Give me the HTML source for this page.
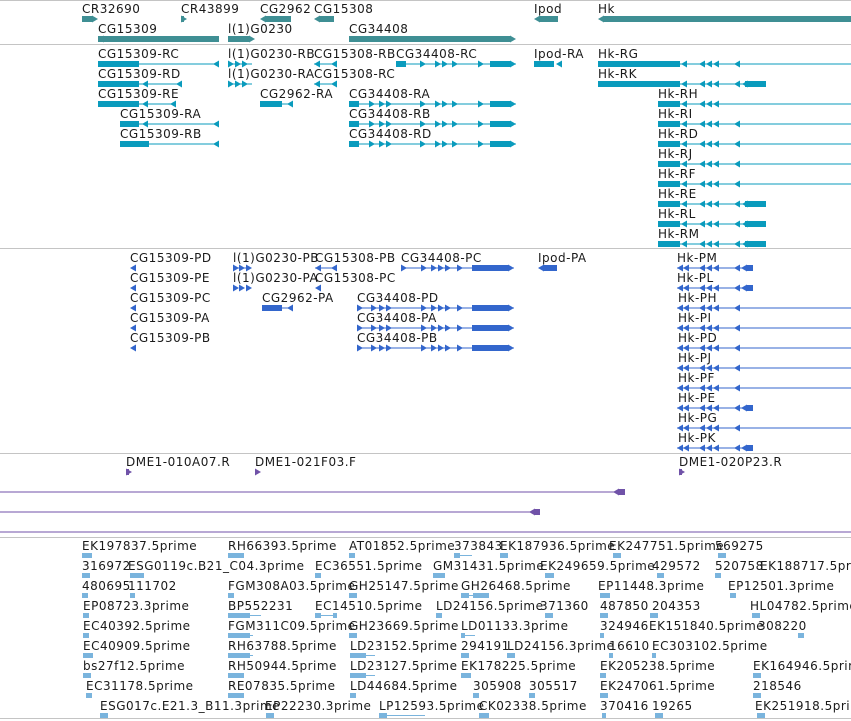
<!DOCTYPE html>
<html><head><meta charset="utf-8"><style>
html,body{margin:0;padding:0;background:#fff;width:851px;height:721px;overflow:hidden}
svg{display:block}
text{font-family:"DejaVu Sans","Liberation Sans",sans-serif;font-size:12px;fill:#1a1a1a;letter-spacing:0.5px}
</style></head><body>
<svg width="851" height="721" viewBox="0 0 851 721" xmlns="http://www.w3.org/2000/svg">
<defs>
<polygon id="la" points="0,0 6,-3.5 6,3.5"/>
<polygon id="ra" points="6,0 0,-3.5 0,3.5"/>
</defs>
<g fill="#c4c4c4">
<rect x="0" y="0" width="851" height="1"/>
<rect x="0" y="44" width="851" height="1"/>
<rect x="0" y="248" width="851" height="1"/>
<rect x="0" y="453" width="851" height="1"/>
<rect x="0" y="537" width="851" height="1"/>
<rect x="0" y="718" width="851" height="1"/>
</g>
<g fill="#3f8f94">
<rect x="82" y="16" width="11" height="6"/><use href="#ra" x="92" y="19"/>
<use href="#ra" x="181" y="19"/><rect x="181" y="16" width="3" height="6"/>
<rect x="266" y="16" width="25" height="6"/><use href="#la" x="260" y="19"/>
<rect x="320" y="16" width="14" height="6"/><use href="#la" x="314" y="19"/>
<rect x="540" y="16" width="18" height="6"/><use href="#la" x="534" y="19"/>
<rect x="604" y="16" width="247" height="6"/><use href="#la" x="598" y="19"/>
<rect x="98" y="36" width="121" height="6"/><use href="#la" x="98" y="39"/>
<rect x="228" y="36" width="22" height="6"/><use href="#ra" x="249" y="39"/>
<rect x="349" y="36" width="161" height="6"/><use href="#ra" x="510" y="39"/>
</g>
<g>
<text x="82" y="13">CR32690</text><text x="181" y="13">CR43899</text><text x="260" y="13">CG2962</text><text x="314" y="13">CG15308</text><text x="534" y="13">Ipod</text><text x="598" y="13">Hk</text>
<text x="98" y="33">CG15309</text><text x="228" y="33">l(1)G0230</text><text x="349" y="33">CG34408</text>
</g>
<g fill="#0a9bbd">
<rect x="98" y="61" width="41" height="6"/><rect x="98" y="63.5" width="121" height="1"/><use href="#la" x="213" y="64"/>
<use href="#ra" x="228" y="64"/><use href="#ra" x="235" y="64"/><use href="#ra" x="242" y="64"/><rect x="228" y="63.5" width="24" height="1"/>
<use href="#la" x="314" y="64"/><rect x="314" y="63.5" width="23" height="1"/><use href="#la" x="331" y="64"/>
<rect x="396" y="61" width="10" height="6"/><rect x="396" y="63.5" width="120" height="1"/><use href="#ra" x="420" y="64"/><use href="#ra" x="435" y="64"/><use href="#ra" x="442" y="64"/><use href="#ra" x="452" y="64"/><use href="#ra" x="478" y="64"/><rect x="490" y="61" width="20" height="6"/><use href="#ra" x="510" y="64"/>
<rect x="534" y="61" width="20" height="6"/><use href="#la" x="556" y="64"/>
<rect x="598" y="61" width="82" height="6"/><rect x="598" y="63.5" width="253" height="1"/><use href="#la" x="681" y="64"/><use href="#la" x="699" y="64"/><use href="#la" x="706" y="64"/><use href="#la" x="713" y="64"/><use href="#la" x="734" y="64"/>
<rect x="98" y="81" width="41" height="6"/><rect x="98" y="83.5" width="84" height="1"/><use href="#la" x="142" y="84"/><use href="#la" x="176" y="84"/>
<use href="#ra" x="228" y="84"/><use href="#ra" x="235" y="84"/><use href="#ra" x="242" y="84"/><rect x="228" y="83.5" width="24" height="1"/>
<use href="#la" x="314" y="84"/><rect x="314" y="83.5" width="23" height="1"/><use href="#la" x="331" y="84"/>
<rect x="598" y="81" width="82" height="6"/><rect x="598" y="83.5" width="168" height="1"/><use href="#la" x="681" y="84"/><use href="#la" x="699" y="84"/><use href="#la" x="706" y="84"/><use href="#la" x="713" y="84"/><use href="#la" x="734" y="84"/><rect x="745" y="81" width="21" height="6"/><use href="#la" x="742" y="84"/>
<rect x="98" y="101" width="41" height="6"/><rect x="98" y="103.5" width="78" height="1"/><use href="#la" x="142" y="104"/><use href="#la" x="170" y="104"/>
<rect x="260" y="101" width="22" height="6"/><rect x="260" y="103.5" width="33" height="1"/><use href="#la" x="287" y="104"/>
<rect x="658" y="101" width="22" height="6"/><rect x="658" y="103.5" width="193" height="1"/><use href="#la" x="681" y="104"/><use href="#la" x="699" y="104"/><use href="#la" x="706" y="104"/><use href="#la" x="713" y="104"/>
<rect x="120" y="121" width="19" height="6"/><rect x="120" y="123.5" width="99" height="1"/><use href="#la" x="142" y="124"/><use href="#la" x="213" y="124"/>
<rect x="658" y="121" width="22" height="6"/><rect x="658" y="123.5" width="193" height="1"/><use href="#la" x="681" y="124"/><use href="#la" x="699" y="124"/><use href="#la" x="706" y="124"/><use href="#la" x="713" y="124"/><use href="#la" x="734" y="124"/>
<rect x="120" y="141" width="29" height="6"/><rect x="120" y="143.5" width="99" height="1"/><use href="#la" x="213" y="144"/>
<rect x="658" y="141" width="22" height="6"/><rect x="658" y="143.5" width="193" height="1"/><use href="#la" x="681" y="144"/><use href="#la" x="699" y="144"/><use href="#la" x="706" y="144"/><use href="#la" x="713" y="144"/><use href="#la" x="734" y="144"/>
<g id="cgt"><rect x="349" y="101" width="10" height="6"/><rect x="349" y="103.5" width="167" height="1"/><use href="#ra" x="369" y="104"/><use href="#ra" x="379" y="104"/><use href="#ra" x="386" y="104"/><use href="#ra" x="420" y="104"/><use href="#ra" x="435" y="104"/><use href="#ra" x="442" y="104"/><use href="#ra" x="452" y="104"/><use href="#ra" x="478" y="104"/><rect x="490" y="101" width="20" height="6"/><use href="#ra" x="510" y="104"/></g>
<use href="#cgt" y="20"/><use href="#cgt" y="40"/>
<g id="hkl"><rect x="658" y="161" width="22" height="6"/><rect x="658" y="163.5" width="193" height="1"/><use href="#la" x="681" y="164"/><use href="#la" x="699" y="164"/><use href="#la" x="706" y="164"/><use href="#la" x="713" y="164"/><use href="#la" x="734" y="164"/></g>
<use href="#hkl" y="20"/>
<g id="hks"><rect x="658" y="201" width="22" height="6"/><rect x="658" y="203.5" width="108" height="1"/><use href="#la" x="681" y="204"/><use href="#la" x="699" y="204"/><use href="#la" x="706" y="204"/><use href="#la" x="713" y="204"/><use href="#la" x="734" y="204"/><rect x="745" y="201" width="21" height="6"/><use href="#la" x="742" y="204"/></g>
<use href="#hks" y="20"/><use href="#hks" y="40"/>
</g>
<g>
<text x="98" y="58">CG15309-RC</text><text x="228" y="58">l(1)G0230-RB</text><text x="314" y="58">CG15308-RB</text><text x="396" y="58">CG34408-RC</text><text x="534" y="58">Ipod-RA</text><text x="598" y="58">Hk-RG</text>
<text x="98" y="78">CG15309-RD</text><text x="228" y="78">l(1)G0230-RA</text><text x="314" y="78">CG15308-RC</text><text x="598" y="78">Hk-RK</text>
<text x="98" y="98">CG15309-RE</text><text x="260" y="98">CG2962-RA</text><text x="349" y="98">CG34408-RA</text><text x="658" y="98">Hk-RH</text>
<text x="120" y="118">CG15309-RA</text><text x="349" y="118">CG34408-RB</text><text x="658" y="118">Hk-RI</text>
<text x="120" y="138">CG15309-RB</text><text x="349" y="138">CG34408-RD</text><text x="658" y="138">Hk-RD</text>
<text x="658" y="158">Hk-RJ</text><text x="658" y="178">Hk-RF</text><text x="658" y="198">Hk-RE</text><text x="658" y="218">Hk-RL</text><text x="658" y="238">Hk-RM</text>
</g>
<g fill="#3366cc">
<use href="#la" x="130" y="268"/><use href="#la" x="130" y="288"/><use href="#la" x="130" y="308"/><use href="#la" x="130" y="328"/><use href="#la" x="130" y="348"/>
<use href="#ra" x="233" y="268"/><use href="#ra" x="239" y="268"/><use href="#ra" x="246" y="268"/><rect x="233" y="267.5" width="18" height="1"/>
<use href="#ra" x="233" y="288"/><use href="#ra" x="239" y="288"/><use href="#ra" x="246" y="288"/>
<use href="#la" x="315" y="268"/><rect x="315" y="267.5" width="22" height="1"/><use href="#la" x="331" y="268"/>
<use href="#la" x="315" y="288"/>
<rect x="262" y="305" width="20" height="6"/><rect x="262" y="307.5" width="31" height="1"/><use href="#la" x="287" y="308"/>
<rect x="401" y="267.5" width="113" height="1"/><use href="#ra" x="401" y="268"/><use href="#ra" x="421" y="268"/><use href="#ra" x="431" y="268"/><use href="#ra" x="438" y="268"/><use href="#ra" x="445" y="268"/><use href="#ra" x="457" y="268"/><rect x="472" y="265" width="36" height="6"/><use href="#ra" x="508" y="268"/>
<rect x="544" y="265" width="13" height="6"/><use href="#la" x="538" y="268"/>
<g id="cgp"><rect x="357" y="307.5" width="157" height="1"/><use href="#ra" x="357" y="308"/><use href="#ra" x="371" y="308"/><use href="#ra" x="379" y="308"/><use href="#ra" x="386" y="308"/><use href="#ra" x="421" y="308"/><use href="#ra" x="431" y="308"/><use href="#ra" x="438" y="308"/><use href="#ra" x="445" y="308"/><use href="#ra" x="457" y="308"/><rect x="472" y="305" width="36" height="6"/><use href="#ra" x="508" y="308"/></g>
<use href="#cgp" y="20"/><use href="#cgp" y="40"/>
<g id="hps"><rect x="677" y="267.5" width="76" height="1"/><use href="#la" x="677" y="268"/><use href="#la" x="683" y="268"/><use href="#la" x="699" y="268"/><use href="#la" x="706" y="268"/><use href="#la" x="713" y="268"/><use href="#la" x="734" y="268"/><use href="#la" x="741" y="268"/><rect x="747" y="265" width="6" height="6"/></g>
<use href="#hps" y="20"/><use href="#hps" y="140"/><use href="#hps" y="180"/>
<g id="hpl"><rect x="677" y="307.5" width="174" height="1"/><use href="#la" x="677" y="308"/><use href="#la" x="683" y="308"/><use href="#la" x="699" y="308"/><use href="#la" x="706" y="308"/><use href="#la" x="713" y="308"/><use href="#la" x="734" y="308"/></g>
<use href="#hpl" y="20"/><use href="#hpl" y="40"/><use href="#hpl" y="60"/><use href="#hpl" y="80"/><use href="#hpl" y="120"/>
</g>
<g>
<text x="130" y="262">CG15309-PD</text><text x="233" y="262">l(1)G0230-PB</text><text x="315" y="262">CG15308-PB</text><text x="401" y="262">CG34408-PC</text><text x="538" y="262">Ipod-PA</text><text x="677" y="262">Hk-PM</text>
<text x="130" y="282">CG15309-PE</text><text x="233" y="282">l(1)G0230-PA</text><text x="315" y="282">CG15308-PC</text><text x="677" y="282">Hk-PL</text>
<text x="130" y="302">CG15309-PC</text><text x="262" y="302">CG2962-PA</text><text x="357" y="302">CG34408-PD</text><text x="678" y="302">Hk-PH</text>
<text x="130" y="322">CG15309-PA</text><text x="357" y="322">CG34408-PA</text><text x="678" y="322">Hk-PI</text>
<text x="130" y="342">CG15309-PB</text><text x="357" y="342">CG34408-PB</text><text x="678" y="342">Hk-PD</text>
<text x="678" y="362">Hk-PJ</text><text x="678" y="382">Hk-PF</text><text x="678" y="402">Hk-PE</text><text x="678" y="422">Hk-PG</text><text x="678" y="442">Hk-PK</text>
</g>
<g fill="#7052a8">
<use href="#ra" x="126" y="472"/><rect x="126" y="469" width="3" height="6"/>
<use href="#ra" x="255" y="472"/>
<use href="#ra" x="679" y="472"/><rect x="679" y="469" width="3" height="6"/>
<rect x="0" y="491.5" width="618" height="1"/><use href="#la" x="613" y="492"/><rect x="618" y="489" width="7" height="6"/>
<rect x="0" y="511.5" width="532" height="1"/><use href="#la" x="529" y="512"/><rect x="534" y="509" width="6" height="6"/>
<rect x="0" y="531.5" width="851" height="1"/>
</g>
<g>
<text x="126" y="466">DME1-010A07.R</text><text x="255" y="466">DME1-021F03.F</text><text x="679" y="466">DME1-020P23.R</text>
</g>
<g fill="#7ab4dd">
<rect x="82" y="553" width="10" height="5"/><rect x="228" y="553" width="16" height="5"/><rect x="349" y="553" width="6" height="5"/><rect x="454" y="555" width="18" height="1"/><rect x="454" y="553" width="6" height="5"/><rect x="500" y="553" width="8" height="5"/><rect x="613" y="553" width="8" height="5"/><rect x="718" y="553" width="8" height="5"/>
<rect x="82" y="573" width="8" height="5"/><rect x="130" y="573" width="14" height="5"/><rect x="315" y="573" width="6" height="5"/><rect x="433" y="573" width="12" height="5"/><rect x="545" y="573" width="9" height="5"/><rect x="657" y="573" width="7" height="5"/><rect x="715" y="573" width="6" height="5"/>
<rect x="82" y="593" width="6" height="5"/><rect x="130" y="593" width="5" height="5"/><rect x="228" y="593" width="6" height="5"/><rect x="349" y="593" width="8" height="5"/><rect x="461" y="595" width="26" height="1"/><rect x="461" y="593" width="8" height="5"/><rect x="473" y="593" width="16" height="5"/><rect x="600" y="593" width="10" height="5"/><rect x="730" y="593" width="6" height="5"/>
<rect x="83" y="613" width="6" height="5"/><rect x="228" y="615" width="33" height="1"/><rect x="228" y="613" width="22" height="5"/><rect x="315" y="615" width="22" height="1"/><rect x="315" y="613" width="6" height="5"/><rect x="333" y="613" width="4" height="5"/><rect x="436" y="613" width="6" height="5"/><rect x="545" y="613" width="8" height="5"/><rect x="600" y="613" width="8" height="5"/><rect x="650" y="613" width="8" height="5"/><rect x="752" y="613" width="8" height="5"/>
<rect x="83" y="633" width="6" height="5"/><rect x="228" y="635" width="25" height="1"/><rect x="228" y="633" width="22" height="5"/><rect x="349" y="633" width="8" height="5"/><rect x="461" y="635" width="14" height="1"/><rect x="461" y="633" width="4" height="5"/><rect x="600" y="633" width="4" height="5"/><rect x="798" y="633" width="6" height="5"/>
<rect x="83" y="653" width="10" height="5"/><rect x="228" y="655" width="25" height="1"/><rect x="228" y="653" width="22" height="5"/><rect x="350" y="655" width="25" height="1"/><rect x="350" y="653" width="16" height="5"/><rect x="461" y="653" width="8" height="5"/><rect x="507" y="653" width="8" height="5"/><rect x="609" y="653" width="4" height="5"/><rect x="652" y="653" width="4" height="5"/>
<rect x="83" y="673" width="8" height="5"/><rect x="228" y="673" width="16" height="5"/><rect x="350" y="675" width="25" height="1"/><rect x="350" y="673" width="16" height="5"/><rect x="461" y="673" width="10" height="5"/><rect x="600" y="673" width="6" height="5"/><rect x="753" y="673" width="8" height="5"/>
<rect x="86" y="693" width="6" height="5"/><rect x="228" y="693" width="16" height="5"/><rect x="350" y="693" width="6" height="5"/><rect x="473" y="693" width="6" height="5"/><rect x="529" y="693" width="6" height="5"/><rect x="600" y="693" width="8" height="5"/><rect x="753" y="693" width="8" height="5"/>
<rect x="100" y="713" width="8" height="5"/><rect x="266" y="713" width="8" height="5"/><rect x="379" y="715" width="46" height="1"/><rect x="379" y="713" width="8" height="5"/><rect x="479" y="713" width="10" height="5"/><rect x="602" y="713" width="4" height="5"/><rect x="655" y="713" width="8" height="5"/><rect x="757" y="713" width="8" height="5"/>
</g>
<g>
<text x="82" y="550">EK197837.5prime</text><text x="228" y="550">RH66393.5prime</text><text x="349" y="550">AT01852.5prime</text><text x="454" y="550">373843</text><text x="500" y="550">EK187936.5prime</text><text x="609" y="550">EK247751.5prime</text><text x="715" y="550">569275</text>
<text x="82" y="570">316972</text><text x="128" y="570">ESG0119c.B21_C04.3prime</text><text x="315" y="570">EC36551.5prime</text><text x="433" y="570">GM31431.5prime</text><text x="540" y="570">EK249659.5prime</text><text x="652" y="570">429572</text><text x="715" y="570">520758</text><text x="760" y="570">EK188717.5prime</text>
<text x="82" y="590">480695</text><text x="128" y="590">111702</text><text x="228" y="590">FGM308A03.5prime</text><text x="349" y="590">GH25147.5prime</text><text x="461" y="590">GH26468.5prime</text><text x="598" y="590">EP11448.3prime</text><text x="728" y="590">EP12501.3prime</text>
<text x="83" y="610">EP08723.3prime</text><text x="228" y="610">BP552231</text><text x="315" y="610">EC14510.5prime</text><text x="436" y="610">LD24156.5prime</text><text x="540" y="610">371360</text><text x="600" y="610">487850</text><text x="652" y="610">204353</text><text x="750" y="610">HL04782.5prime</text>
<text x="83" y="630">EC40392.5prime</text><text x="228" y="630">FGM311C09.5prime</text><text x="349" y="630">GH23669.5prime</text><text x="461" y="630">LD01133.3prime</text><text x="600" y="630">324946</text><text x="649" y="630">EK151840.5prime</text><text x="758" y="630">308220</text>
<text x="83" y="650">EC40909.5prime</text><text x="228" y="650">RH63788.5prime</text><text x="350" y="650">LD23152.5prime</text><text x="461" y="650">294191</text><text x="507" y="650">LD24156.3prime</text><text x="609" y="650">16610</text><text x="652" y="650">EC303102.5prime</text>
<text x="83" y="670">bs27f12.5prime</text><text x="228" y="670">RH50944.5prime</text><text x="350" y="670">LD23127.5prime</text><text x="461" y="670">EK178225.5prime</text><text x="600" y="670">EK205238.5prime</text><text x="753" y="670">EK164946.5prime</text>
<text x="86" y="690">EC31178.5prime</text><text x="228" y="690">RE07835.5prime</text><text x="350" y="690">LD44684.5prime</text><text x="473" y="690">305908</text><text x="529" y="690">305517</text><text x="600" y="690">EK247061.5prime</text><text x="753" y="690">218546</text>
<text x="100" y="710">ESG017c.E21.3_B11.3prime</text><text x="265" y="710">EP22230.3prime</text><text x="379" y="710">LP12593.5prime</text><text x="479" y="710">CK02338.5prime</text><text x="600" y="710">370416</text><text x="652" y="710">19265</text><text x="755" y="710">EK251918.5prime</text>
</g>
</svg>
</body></html>
